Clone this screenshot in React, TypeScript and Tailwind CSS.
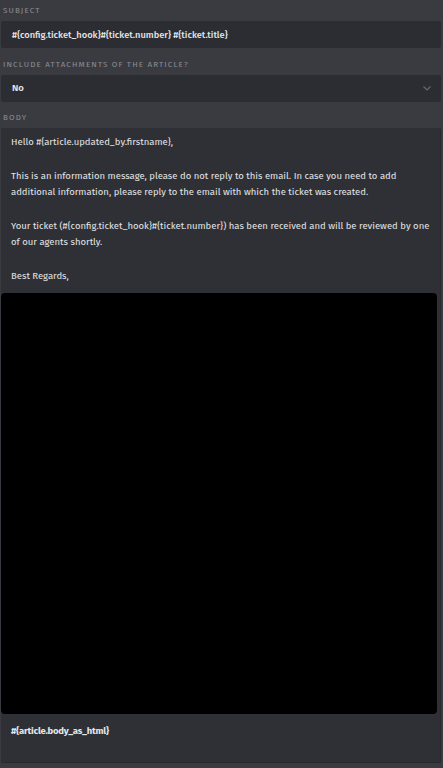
import React from "react";

const font = { fontFamily: '"Fira Sans", "Open Sans", "Noto Sans", sans-serif' };

function Label({ children, h }: { children: React.ReactNode; h: string }) {
  return (
    <div className={`${h} pl-[3px] pb-[6px] flex items-end text-[8px] tracking-[1.15px] uppercase text-[#8b8e95] leading-none`}>
      {children}
    </div>
  );
}

export default function App() {
  return (
    <div className="w-[443px] h-[768px] bg-[#3a3b41] overflow-hidden text-[#e3e4e6]" style={font}>
      <Label h="h-[21px]">Subject</Label>
      <div className="ml-[1px] mr-[2px] h-[27px] rounded-[2px] bg-[#2c2d32] flex items-center pl-[11px] text-[9.3px] font-medium">
        #&#123;config.ticket_hook&#125;#&#123;ticket.number&#125; #&#123;ticket.title&#125;
      </div>
      <Label h="h-[27px]">Include attachments of the article?</Label>
      <div className="ml-[1px] mr-[2px] h-[27px] rounded-[2px] bg-[#2c2d32] flex items-center justify-between pl-[11px] pr-[10px] text-[9.5px] font-semibold">
        <span>No</span>
        <svg width="8" height="5" viewBox="0 0 8 5" fill="none">
          <path d="M0.5 0.5 L4 4 L7.5 0.5" stroke="#65676d" strokeWidth="1.2" />
        </svg>
      </div>
      <Label h="h-[26px]">Body</Label>
      <div className="ml-[1px] mr-[2px] h-[635px] rounded-[2px] bg-[#2f3035] border-r border-b border-[#28292d] flex flex-col text-[9.5px] leading-[16px]">
        <div className="pl-[10px] pr-[6px] pt-[6px]">
          <p>Hello #&#123;article.updated_by.firstname&#125;,</p>
          <div className="h-[18px]" />
          <p>
            This is an information message, please do not reply to this email. In case you need to add additional
            information, please reply to the email with which the ticket was created.
          </p>
          <div className="h-[18px]" />
          <p>
            Your ticket (#&#123;config.ticket_hook&#125;#&#123;ticket.number&#125;) has been received and will be
            reviewed by one of our agents shortly.
          </p>
          <div className="h-[18px]" />
          <p>Best Regards,</p>
        </div>
        <div className="mt-[9px] mr-[3px] h-[421px] bg-black rounded-[4px]" />
        <div className="px-[10px] pt-[9px] font-bold tracking-[-0.2px]">#&#123;article.body_as_html&#125;</div>
      </div>
    </div>
  );
}
